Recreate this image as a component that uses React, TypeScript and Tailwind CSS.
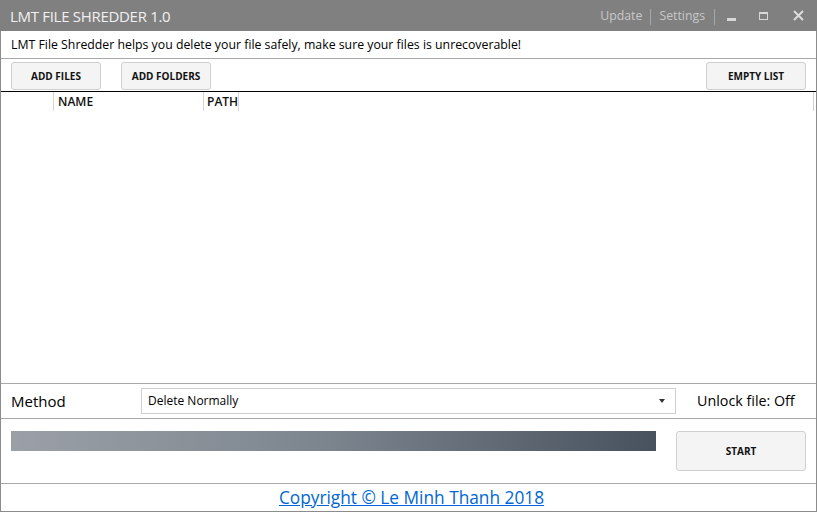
import React from "react";

const font = "font-['Segoe_UI','Open_Sans',sans-serif]";

function TitleBar() {
  return (
    <div className="h-[31px] bg-[#808080] flex items-center pl-[10px] pt-[2px] text-[#f0f0f0] shrink-0">
      <div className="text-[15px] leading-none tracking-[-0.3px]">LMT FILE SHREDDER 1.0</div>
      <div className="ml-auto flex items-center h-full text-[#c8c8c8] text-[12.3px]">
        <span className="pl-[2px]">Update</span>
        <span className="w-px h-[16px] bg-[#a6a6a6] mx-[8px]" />
        <span>Settings</span>
        <span className="w-px h-[16px] bg-[#a6a6a6] ml-[9px]" />
        <div className="w-[32px] flex justify-center">
          <span className="block w-[9px] h-[3px] bg-[#d8d8d8] mt-[5px]" />
        </div>
        <div className="w-[32px] flex justify-center">
          <span className="block w-[9px] h-[8px] border border-[#d8d8d8] border-t-2 -mt-[2px]" />
        </div>
        <div className="w-[38px] flex justify-center -mt-[2px]">
          <svg width="11" height="11" viewBox="0 0 11 11">
            <path d="M1 1L10 10M10 1L1 10" stroke="#dcdcdc" strokeWidth="2" />
          </svg>
        </div>
      </div>
    </div>
  );
}

function Btn({ label, className = "" }: { label: string; className?: string }) {
  return (
    <button
      className={`h-[28px] rounded-[3px] border border-[#cfcfcf] bg-[#f4f4f4] text-[10px] font-bold text-[#111] ${className}`}
    >
      {label}
    </button>
  );
}

export default function App() {
  return (
    <div className={`w-[817px] h-[512px] flex flex-col bg-white ${font}`}>
      <TitleBar />
      <div className="flex-1 flex flex-col border-x border-b border-[#8c8c8c]">
        <div className="h-[28px] border-b border-[#a8a8a8] flex items-center pl-[10px] pt-[2px] text-[12.3px] text-black">
          LMT File Shredder helps you delete your file safely, make sure your files is unrecoverable!
        </div>
        <div className="h-[33px] border-b border-black flex items-center pl-[10px] pr-[10px] pt-[2px]">
          <Btn label="ADD FILES" className="w-[90px]" />
          <Btn label="ADD FOLDERS" className="w-[90px] ml-[20px]" />
          <Btn label="EMPTY LIST" className="w-[100px] ml-auto" />
        </div>
        <div className="h-[19px] flex items-center text-[12px] font-semibold text-[#111] pr-[2px]">
          <div className="w-[52px] h-full" />
          <div className="w-[150px] h-full border-l border-[#d6d6d6] pl-[4px] flex items-center">NAME</div>
          <div className="w-[36px] h-full border-x border-[#d6d6d6] pl-[3px] flex items-center">PATH</div>
          <div className="flex-1" />
          <div className="w-px h-full bg-[#d0d0d0]" />
        </div>
        <div className="flex-1" />
        <div className="h-[36px] border-y border-[#a8a8a8] flex items-center pl-[10px]">
          <div className="w-[130px] text-[15px] text-black">Method</div>
          <div className="w-[535px] h-[26px] border border-[#cfcfcf] flex items-center pl-[6px] pr-[10px] text-[12px] text-black">
            Delete Normally
            <span className="ml-auto block w-0 h-0 border-x-[3px] border-x-transparent border-t-[4px] border-t-[#333]" />
          </div>
          <div className="ml-[21px] text-[14.3px] text-black">Unlock file: Off</div>
        </div>
        <div className="h-[65px] border-b border-[#a8a8a8] flex items-start pl-[10px] pr-[10px] pt-[12px]">
          <div className="w-[645px] h-[20px] bg-gradient-to-r from-[#9ba0a7] via-[#7b848d] to-[#48525e]" />
          <Btn label="START" className="w-[130px] h-[40px] ml-auto" />
        </div>
        <div className="h-[27px] flex items-center justify-center pl-[6px]">
          <a href="#" className="text-[17.3px] leading-none text-[#0066d6] underline">
            Copyright © Le Minh Thanh 2018
          </a>
        </div>
      </div>
    </div>
  );
}
